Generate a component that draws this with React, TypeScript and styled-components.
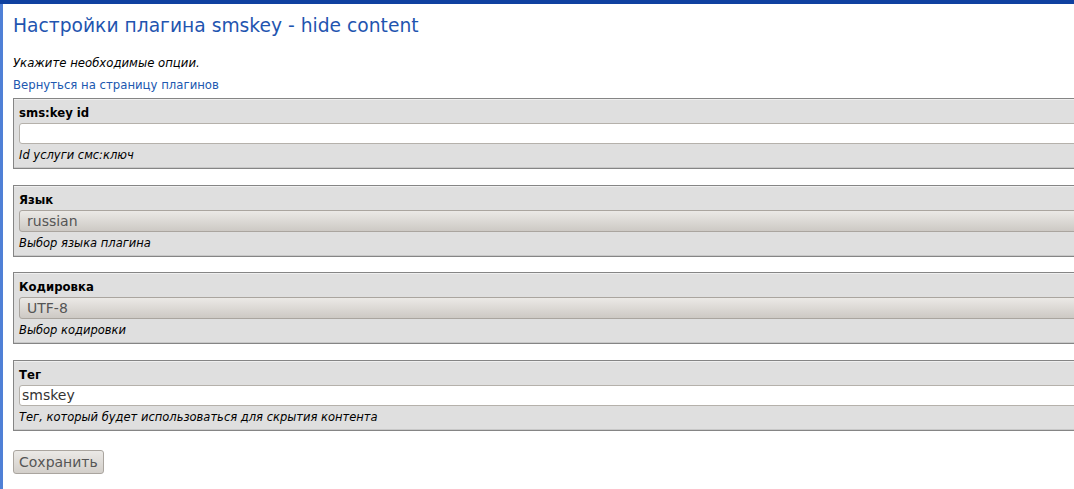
import React, { useState } from 'react'
import styled, { createGlobalStyle } from 'styled-components'

const GlobalStyle = createGlobalStyle`
  html, body {
    margin: 0;
    padding: 0;
    background: #ffffff;
    overflow: hidden;
  }
  body {
    font-family: 'DejaVu Sans', Verdana, sans-serif;
    font-size: 11.7px;
    color: #000;
  }
`

function App() {
  const [keyId, setKeyId] = useState('')
  const [lang, setLang] = useState('russian')
  const [charset, setCharset] = useState('UTF-8')
  const [tag, setTag] = useState('smskey')

  return (
    <Page>
      <GlobalStyle />
      <Content>
        <Title>Настройки плагина smskey - hide content</Title>
        <Hint>Укажите необходимые опции.</Hint>
        <BackLink href="#">Вернуться на страницу плагинов</BackLink>
        <Form onSubmit={(e) => e.preventDefault()}>
          <Field>
            <Label>sms:key id</Label>
            <TextInput value={keyId} onChange={(e) => setKeyId(e.target.value)} />
            <Description>Id услуги смс:ключ</Description>
          </Field>
          <Field>
            <Label>Язык</Label>
            <Select value={lang} onChange={(e) => setLang(e.target.value)}>
              <option value="russian">russian</option>
              <option value="english">english</option>
            </Select>
            <Description>Выбор языка плагина</Description>
          </Field>
          <Field>
            <Label>Кодировка</Label>
            <Select value={charset} onChange={(e) => setCharset(e.target.value)}>
              <option value="UTF-8">UTF-8</option>
              <option value="windows-1251">windows-1251</option>
            </Select>
            <Description>Выбор кодировки</Description>
          </Field>
          <Field>
            <Label>Тег</Label>
            <TextInput value={tag} onChange={(e) => setTag(e.target.value)} />
            <Description>Тег, который будет использоваться для скрытия контента</Description>
          </Field>
          <SaveButton type="submit">Сохранить</SaveButton>
        </Form>
      </Content>
    </Page>
  )
}

export default App

const Page = styled.div`
  border-top: 4px solid #0f41a0;
  min-height: 485px;
  display: flex;
`

const Content = styled.div`
  border-left: 3px solid #4f80d6;
  flex: 1;
  padding: 10px 0 0 10px;
  display: flex;
  flex-direction: column;
`

const Title = styled.h1`
  margin: 0;
  font-weight: normal;
  font-size: 18.7px;
  line-height: 24px;
  color: #1f55b0;
`

const Hint = styled.p`
  margin: 18px 0 0 0;
  font-style: italic;
  line-height: 15px;
`

const BackLink = styled.a`
  margin-top: 7px;
  line-height: 15px;
  color: #2058b0;
  text-decoration: none;
  align-self: flex-start;
`

const Form = styled.form`
  margin-top: 5px;
  display: flex;
  flex-direction: column;
  gap: 15.5px;
  width: 1160px;
`

const Field = styled.div`
  background: #dfdfdf;
  border: 1px solid #858585;
  box-shadow: inset 0 1px 0 #efefef, inset 0 -1px 0 #c8c8c8;
  padding: 7px 0 5px 5px;
  display: flex;
  flex-direction: column;
`

const Label = styled.label`
  font-weight: bold;
  line-height: 15px;
`

const TextInput = styled.input`
  margin-top: 2px;
  height: 21px;
  box-sizing: border-box;
  border: 1px solid #b5b1ab;
  border-radius: 3px;
  background: #ffffff;
  padding: 0 2px;
  font-family: 'DejaVu Sans', sans-serif;
  font-size: 14px;
  color: #333;
  outline: none;
`

const Select = styled.select`
  margin-top: 2px;
  height: 22px;
  box-sizing: border-box;
  border: 1px solid #aaa59f;
  border-radius: 3px;
  background: linear-gradient(#ebe9e6, #cdc9c4);
  padding: 0 7px;
  font-family: 'DejaVu Sans', sans-serif;
  font-size: 14px;
  color: #555;
  appearance: none;
  outline: none;
`

const Description = styled.div`
  margin-top: 4px;
  font-style: italic;
  font-size: 11.5px;
  line-height: 15px;
`

const SaveButton = styled.button`
  margin: 3.5px 0 0 0;
  align-self: flex-start;
  height: 24px;
  padding: 0 5px;
  border: 1px solid #aaa59f;
  border-radius: 3px;
  background: linear-gradient(#ebe9e6, #d3cfca);
  font-family: 'DejaVu Sans', sans-serif;
  font-size: 14px;
  color: #555;
`
